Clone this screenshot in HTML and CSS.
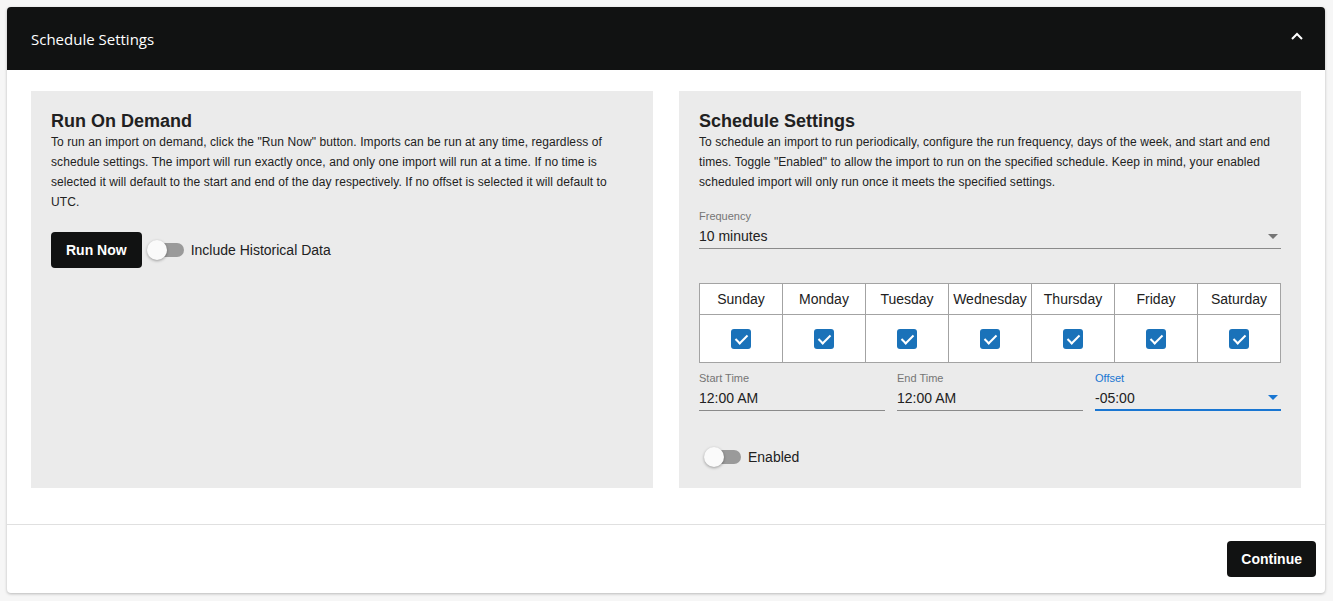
FILE: index.html
```html
<!DOCTYPE html>
<html lang="en">
<head>
    <meta charset="UTF-8">
    <meta name="viewport" content="width=device-width, initial-scale=1.0">
    <title>Schedule Settings</title>
    <link rel="stylesheet" href="styles.css">
</head>
<body>
    <div class="card">
        <div class="card-header">
            <span class="card-title">Schedule Settings</span>
            <svg class="chevron" width="14" height="10" viewBox="0 0 14 10">
                <path d="M2 8 L7 3 L12 8" fill="none" stroke="#fff" stroke-width="2"/>
            </svg>
        </div>

        <div class="card-body">
            <div class="panel">
                <h2>Run On Demand</h2>
                <p>To run an import on demand, click the "Run Now" button. Imports can be run at any time, regardless of schedule settings. The import will run exactly once, and only one import will run at a time. If no time is selected it will default to the start and end of the day respectively. If no offset is selected it will default to UTC.</p>
                <div class="run-row">
                    <button class="btn">Run Now</button>
                    <label class="switch">
                        <span class="track"><span class="thumb"></span></span>
                        <span class="switch-label">Include Historical Data</span>
                    </label>
                </div>
            </div>

            <div class="panel">
                <h2>Schedule Settings</h2>
                <p>To schedule an import to run periodically, configure the run frequency, days of the week, and start and end times. Toggle "Enabled" to allow the import to run on the specified schedule. Keep in mind, your enabled scheduled import will only run once it meets the specified settings.</p>

                <div class="field frequency">
                    <div class="field-label">Frequency</div>
                    <div class="field-input">
                        <span>10 minutes</span>
                        <span class="caret"></span>
                    </div>
                </div>

                <table class="days">
                    <tr>
                        <th>Sunday</th><th>Monday</th><th>Tuesday</th><th>Wednesday</th><th>Thursday</th><th>Friday</th><th>Saturday</th>
                    </tr>
                    <tr>
                        <td><span class="check"></span></td>
                        <td><span class="check"></span></td>
                        <td><span class="check"></span></td>
                        <td><span class="check"></span></td>
                        <td><span class="check"></span></td>
                        <td><span class="check"></span></td>
                        <td><span class="check"></span></td>
                    </tr>
                </table>

                <div class="times">
                    <div class="field">
                        <div class="field-label">Start Time</div>
                        <div class="field-input"><span>12:00 AM</span></div>
                    </div>
                    <div class="field">
                        <div class="field-label">End Time</div>
                        <div class="field-input"><span>12:00 AM</span></div>
                    </div>
                    <div class="field focused">
                        <div class="field-label">Offset</div>
                        <div class="field-input">
                            <span>-05:00</span>
                            <span class="caret"></span>
                        </div>
                    </div>
                </div>

                <label class="switch enabled-row">
                    <span class="track"><span class="thumb"></span></span>
                    <span class="switch-label">Enabled</span>
                </label>
            </div>
        </div>

        <div class="card-footer">
            <button class="btn btn-continue">Continue</button>
        </div>
    </div>
</body>
</html>
```

FILE: styles.css
```css
body {
    margin: 0;
    padding: 7px 8px 8px 7px;
    background-color: #f6f6f6;
    font-family: "Liberation Sans", Arial, sans-serif;
    color: #212121;
}
.card {
    background-color: #fff;
    border-radius: 4px;
    box-shadow: 0 1px 3px rgba(0, 0, 0, 0.25);
}
.card-header {
    height: 63px;
    background-color: #111212;
    border-radius: 4px 4px 0 0;
    display: flex;
    align-items: center;
    justify-content: space-between;
    padding: 0 24px;
}
.card-title {
    font-family: "Open Sans", sans-serif;
    font-size: 15px;
    color: #fff;
}
.chevron {
    margin-top: -6px;
    margin-right: -3px;
}
.card-body {
    display: grid;
    grid-template-columns: 1fr 1fr;
    gap: 26px;
    padding: 21px 24px 36px 24px;
}
.panel {
    background-color: #ebebeb;
    padding: 20px 20px 12px 20px;
}
h2 {
    margin: 0;
    font-size: 18px;
    line-height: 21px;
    font-weight: bold;
}
p {
    margin: 0;
    font-size: 12px;
    line-height: 20px;
    letter-spacing: 0.08px;
    color: #222;
}
.run-row {
    display: flex;
    align-items: center;
    margin-top: 20px;
}
.btn {
    height: 36px;
    padding: 0 15px;
    border: none;
    border-radius: 4px;
    background-color: #111212;
    color: #fff;
    font-family: "Liberation Sans", Arial, sans-serif;
    font-size: 14px;
    font-weight: bold;
    cursor: pointer;
}
.btn-continue {
    padding: 0 14px;
}
.switch {
    display: flex;
    align-items: center;
    margin-left: 5px;
}
.track {
    position: relative;
    width: 34px;
    height: 14px;
    border-radius: 7px;
    background-color: #9a9a9a;
    margin-left: 3px;
}
.thumb {
    position: absolute;
    left: -3px;
    top: -3px;
    width: 20px;
    height: 20px;
    border-radius: 50%;
    background-color: #fafafa;
    box-shadow: 0 1px 3px rgba(0, 0, 0, 0.35);
}
.switch-label {
    margin-left: 7px;
    font-size: 14px;
}
.field-label {
    font-size: 11px;
    line-height: 16px;
    color: #757575;
}
.field-input {
    height: 24px;
    display: flex;
    align-items: center;
    justify-content: space-between;
    font-size: 14px;
    border-bottom: 1px solid #8a8a8a;
}
.frequency {
    margin-top: 16px;
}
.caret {
    width: 0;
    height: 0;
    border-left: 5px solid transparent;
    border-right: 5px solid transparent;
    border-top: 5px solid #757575;
    margin-right: 3px;
}
.focused .field-label {
    color: #1976d2;
}
.focused .field-input {
    border-bottom: 2px solid #1976d2;
    height: 23px;
}
.focused .caret {
    border-top-color: #1976d2;
}
.days {
    width: 100%;
    margin-top: 34px;
    border-collapse: collapse;
    table-layout: fixed;
    background-color: #fff;
}
.days th, .days td {
    border: 1px solid #a3a3a3;
    text-align: center;
    padding: 0;
}
.days th {
    height: 30px;
    font-size: 14px;
    font-weight: normal;
}
.days td {
    height: 47px;
}
.check {
    display: inline-block;
    width: 20px;
    height: 20px;
    border-radius: 3px;
    background-color: #1a72b9;
    vertical-align: middle;
    position: relative;
}
.check::after {
    content: "";
    position: absolute;
    left: 7px;
    top: 3px;
    width: 5px;
    height: 10px;
    border-right: 2px solid #fff;
    border-bottom: 2px solid #fff;
    transform: rotate(45deg);
}
.times {
    display: grid;
    grid-template-columns: 1fr 1fr 1fr;
    gap: 12px;
    margin-top: 7px;
}
.enabled-row {
    margin-top: 27px;
    height: 38px;
}
.card-footer {
    border-top: 1px solid #e0e0e0;
    display: flex;
    justify-content: flex-end;
    padding: 16px 9px 16px 16px;
}
```
